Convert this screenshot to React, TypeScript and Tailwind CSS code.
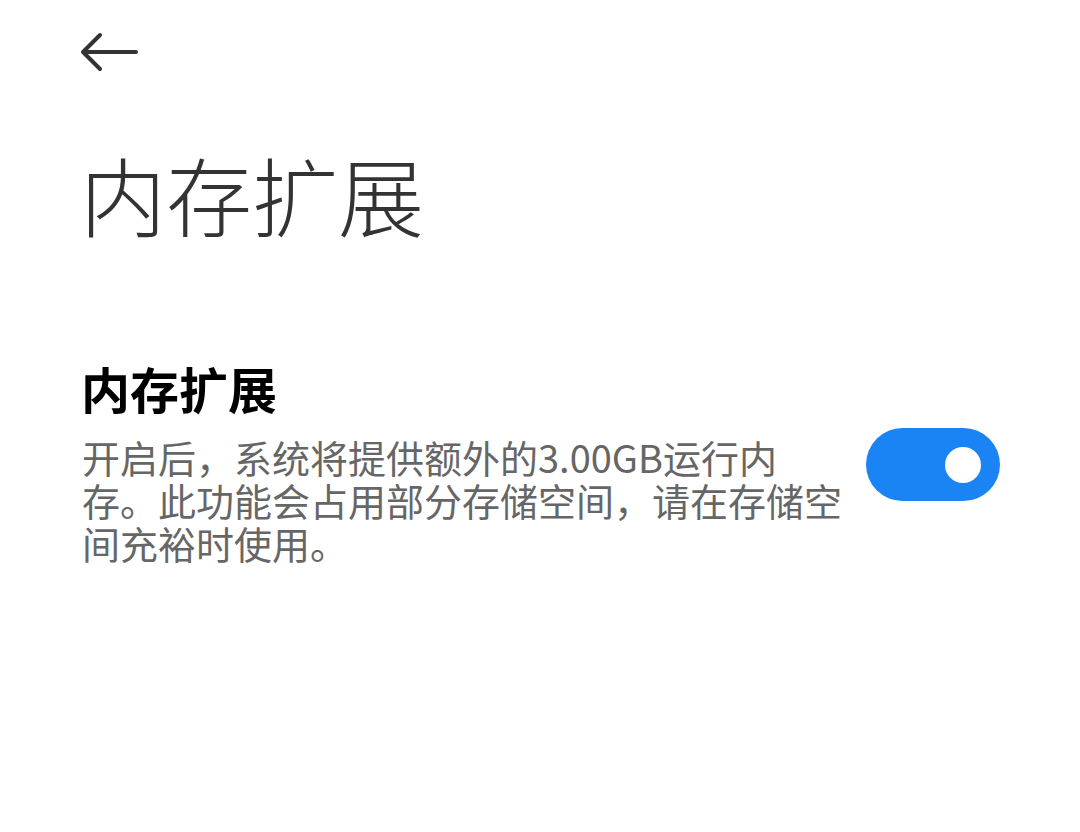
export default function App() {
  return (
    <div
      className="min-h-[832px] w-[1080px] bg-white pl-[82px] pr-[80px]"
      style={{ fontFamily: '"Noto Sans CJK SC", "Noto Sans", sans-serif' }}
    >
      <div className="pt-[30px]">
        <svg width="58" height="44" viewBox="0 0 58 44" fill="none" className="-ml-[2px]">
          <path
            d="M56 22H4M20 5L3 22l17 17"
            stroke="#333"
            strokeWidth="4"
            strokeLinecap="round"
            strokeLinejoin="round"
          />
        </svg>
      </div>

      <h1 className="mt-[77px] -ml-[2px] text-[86px] leading-none font-light text-[#333]">内存扩展</h1>

      <div className="mt-[126px] flex items-start justify-between">
        <div className="w-[764px]">
          <div className="-ml-[1px] text-[49px] leading-none font-bold text-black">内存扩展</div>
          <p className="mt-[23px] text-[38px] leading-[43px] text-[#666]">
            开启后，系统将提供额外的3.00GB运行内存。此功能会占用部分存储空间，请在存储空间充裕时使用。
          </p>
        </div>
        <div className="mt-[65px] flex h-[73px] w-[134px] items-center justify-end rounded-full bg-[#1b84f4] pr-[19px]">
          <div className="h-[36px] w-[36px] rounded-full bg-white" />
        </div>
      </div>
    </div>
  );
}
